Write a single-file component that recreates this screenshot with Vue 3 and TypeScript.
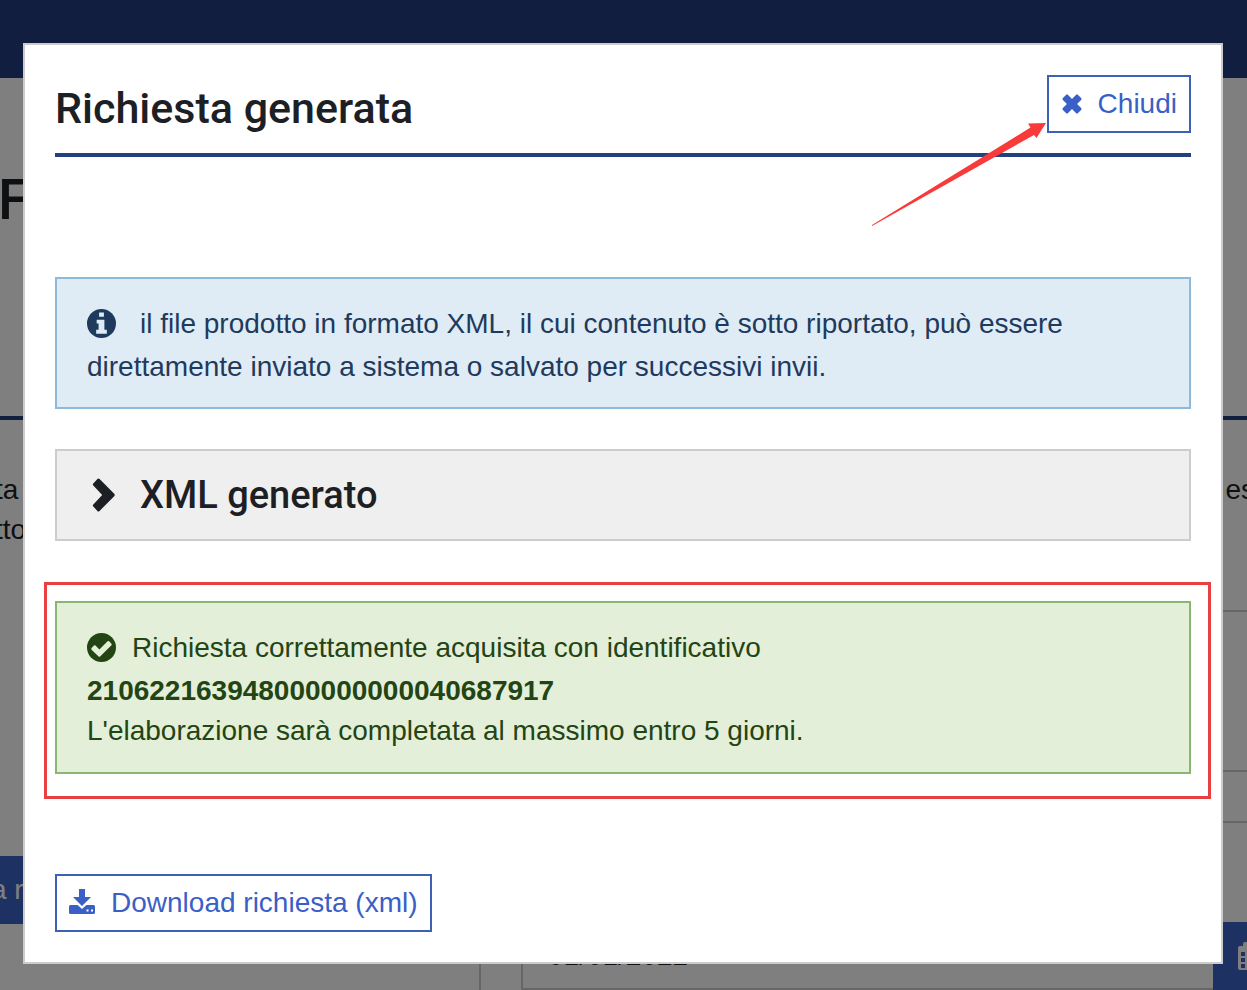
<script setup lang="ts">
import { ref } from 'vue'

const requestId = '210622163948000000000040687917'
const requestDate = ref('01/01/2022')
const note = ref('')
const open = ref(true)
const expanded = ref(false)
</script>

<template>
  <div class="page">
    <header class="topbar"></header>
    <main class="content">
      <h1 class="page-title">F</h1>
      <hr class="rule" />
      <div class="intro">
        <p>ta<br />tto</p>
        <p>es</p>
      </div>
      <div class="columns">
        <section class="left-column">
          <button type="button" class="primary">a r</button>
        </section>
        <section class="right-column">
          <div class="panel"></div>
          <input v-model="note" class="field" type="text" aria-label="Note" />
          <div class="date-group">
            <input v-model="requestDate" class="date" type="text" aria-label="Data" />
            <button type="button" class="calendar" aria-label="Calendario">
              <svg viewBox="0 0 26 28" width="26" height="28">
                <path
                  fill-rule="evenodd"
                  fill="currentColor"
                  d="M2 4H5V2Q5 0 7 0H8Q10 0 10 2V4H16V2Q16 0 18 0H19Q21 0 21 2V4H24Q26 4 26 6V26Q26 28 24 28H2Q0 28 0 26V6Q0 4 2 4ZM3 10V14H7V10ZM9 10V14H13V10ZM15 10V14H19V10ZM3 16V20H7V16ZM9 16V20H13V16ZM15 16V20H19V16ZM3 22V26H7V22ZM9 22V26H13V22ZM15 22V26H19V22Z"
                />
              </svg>
            </button>
          </div>
        </section>
      </div>
    </main>

    <div v-if="open" class="backdrop">
      <section class="modal" role="dialog" aria-modal="true" aria-labelledby="dialog-title">
        <div class="modal-header">
          <h2 id="dialog-title">Richiesta generata</h2>
          <button type="button" class="outline close" @click="open = false">
            <svg class="times" viewBox="0 0 20 20" width="20" height="20" aria-hidden="true">
              <path
                fill="currentColor"
                d="M4.2.7Q5 0 5.800.7L10 4.900 14.200.7Q15 0 15.800.7L19.300 4.200Q20 5 19.300 5.800L15.100 10 19.300 14.200Q20 15 19.300 15.800L15.800 19.300Q15 20 14.200 19.300L10 15.100 5.800 19.300Q5 20 4.200 19.300L.7 15.800Q0 15 .7 14.200L4.900 10 .7 5.800Q0 5 .7 4.200Z"
              />
            </svg>
            <span>Chiudi</span>
          </button>
          <svg class="arrow" viewBox="0 0 176 104" width="176" height="104" aria-hidden="true">
            <path fill="#f93a3a" d="M1 103 159.500 5.500 157 1.500 175 1 165.500 16 163 13 1 104Z" />
          </svg>
        </div>

        <div class="alert info">
          <svg class="status-icon" viewBox="0 0 30 30" width="29" height="29" aria-hidden="true">
            <circle cx="15" cy="15" r="15" fill="currentColor" />
            <path
              fill="#dfebf5"
              d="M12.500 3.500H17.500V8H12.500ZM10 11H18V21.500H20.500V25.500H9.500V21.500H12V15H10Z"
            />
          </svg>
          <span>il file prodotto in formato XML, il cui contenuto è sotto riportato, può essere direttamente inviato a sistema o salvato per successivi invii.</span>
        </div>

        <button type="button" class="accordion" :aria-expanded="expanded" @click="expanded = !expanded">
          <svg viewBox="0 0 24 34" width="24" height="34" aria-hidden="true">
            <path
              fill="currentColor"
              d="M1.300 5.400 5.400 1.100Q6.500.1 7.600 1.100L22.200 15.800Q23.300 17 22.200 18.200L7.600 32.900Q6.500 33.900 5.400 32.900L1.300 28.600Q.3 27.500 1.300 26.400L10.200 17 1.300 7.600Q.3 6.500 1.300 5.400Z"
            />
          </svg>
          <span>XML generato</span>
        </button>

        <div class="result">
          <div class="alert success">
            <svg class="status-icon" viewBox="0 0 30 30" width="29" height="29" aria-hidden="true">
              <circle cx="15" cy="15" r="15" fill="currentColor" />
              <path
                fill="#e3efd9"
                d="M4.700 15.600 7.200 13Q8 12.300 8.800 13L12.800 17 21.300 8.600Q22.100 7.900 22.900 8.600L25.300 11Q26 11.800 25.300 12.600L13.600 24.200Q12.800 25 12 24.200L4.700 17.200Q4 16.400 4.700 15.600Z"
              />
            </svg>
            <span>Richiesta correttamente acquisita con identificativo</span><br />
            <strong>{{ requestId }}</strong><br />
            L'elaborazione sarà completata al massimo entro 5 giorni.
          </div>
        </div>

        <button type="button" class="outline download">
          <svg class="tray" viewBox="0 0 26 25" width="26" height="25" aria-hidden="true">
            <path
              fill="currentColor"
              fill-rule="evenodd"
              d="M10 0H16V8H22L13 17 4 8H10ZM1.500 16H8.500L13 20 17.500 16H24.500Q26 16 26 17.500V23.500Q26 25 24.500 25H1.500Q0 25 0 23.500V17.500Q0 16 1.500 16ZM17.500 20.500V22.500H19.500V20.500ZM22 20.500V22.500H24V20.500Z"
            />
          </svg>
          <span>Download richiesta (xml)</span>
        </button>
      </section>
    </div>
  </div>
</template>

<style>
body {
  margin: 0;
  background: #fff;
}
</style>

<style scoped>
* {
  box-sizing: border-box;
}

.page {
  height: 100vh;
  overflow: hidden;
  font-family: "Liberation Sans", Arial, sans-serif;
  font-size: 28px;
  line-height: 40px;
  color: #1c2024;
}

button,
input {
  font: inherit;
  border-radius: 0;
}

button {
  cursor: pointer;
}

svg {
  display: block;
  flex: none;
}

.topbar {
  height: 78px;
  background: #223c7e;
}

.page-title {
  margin: 90px 0 0 -2px;
  font: 500 56px/64px Roboto, sans-serif;
}

.rule {
  height: 4px;
  margin: 184px 0 50px;
  border: 0;
  background: #24407e;
}

.intro {
  display: flex;
  justify-content: space-between;
  margin: 0 -8px 0 -5px;
}

.intro p {
  margin: 0;
}

.columns {
  display: grid;
  grid-template-columns: 481px 1fr;
  gap: 40px;
  padding-top: 60px;
}

.left-column {
  border-right: 2px solid #ccc;
  padding-top: 246px;
}

.primary {
  width: 240px;
  height: 68px;
  margin-left: -9px;
  padding: 0;
  border: 0;
  background: #3a62c4;
  color: #fff;
  text-align: left;
}

.panel {
  height: 160px;
  border-top: 2px solid #ccc;
}

.field {
  display: block;
  width: 100%;
  height: 53px;
  margin-bottom: 99px;
  border: 2px solid #ccc;
  border-right: 0;
  background: #fff;
}

.date-group {
  display: flex;
  height: 68px;
}

.date {
  flex: 1;
  min-width: 0;
  padding: 0 25px;
  border: 2px solid #ccc;
  border-right: 0;
  background: #fff;
  color: inherit;
}

.calendar {
  width: 34px;
  padding: 0 0 0 25px;
  overflow: hidden;
  border: 0;
  background: #3a62c4;
  color: #fff;
}

.backdrop {
  position: fixed;
  inset: 0;
  overflow: hidden;
  padding: 43px 24px 26px 23px;
  background: rgba(0, 0, 0, 0.5);
}

.modal {
  display: flex;
  flex-direction: column;
  align-items: stretch;
  padding: 30px;
  border: 2px solid #ccc;
  background: #fff;
}

.modal-header {
  position: relative;
  display: flex;
  align-items: flex-start;
  justify-content: space-between;
  padding-bottom: 20px;
  border-bottom: 4px solid #24407e;
}

.modal-header h2 {
  margin: 0;
  padding-top: 8px;
  font: 500 43px/50px Roboto, sans-serif;
}

.arrow {
  position: absolute;
  top: 47px;
  right: 144px;
}

.outline {
  display: flex;
  align-items: center;
  gap: 16px;
  height: 58px;
  padding: 0 12px;
  border: 2px solid #3d62b4;
  background: #fff;
  color: #3a5fc6;
}

.times {
  margin-left: 1px;
}

.tray {
  margin-bottom: 4px;
}

.alert {
  padding: 25px 30px 20px;
  border: 2px solid;
}

.info {
  margin-top: 120px;
  border-color: #8cbbd9;
  background: #dfebf5;
  color: #1e3a5c;
}

.status-icon {
  display: inline-block;
  margin: 0 24px 9px 0;
  vertical-align: -14px;
}

.accordion {
  display: flex;
  align-items: center;
  gap: 24px;
  height: 92px;
  margin-top: 40px;
  padding: 0 35px;
  border: 2px solid #ccc;
  background: #efefef;
  color: #1c2024;
  font: 500 38px/48px Roboto, sans-serif;
}

.result {
  position: relative;
  margin-top: 60px;
}

.result::after {
  content: "";
  position: absolute;
  inset: -19px -20px -25px -11px;
  border: 3px solid #e64040;
  pointer-events: none;
}

.success {
  padding-bottom: 21px;
  border-color: #87b770;
  background: #e3efd9;
  color: #234413;
}

.success .status-icon {
  margin-right: 16px;
}

.download {
  align-self: flex-start;
  margin-top: 100px;
}
</style>
